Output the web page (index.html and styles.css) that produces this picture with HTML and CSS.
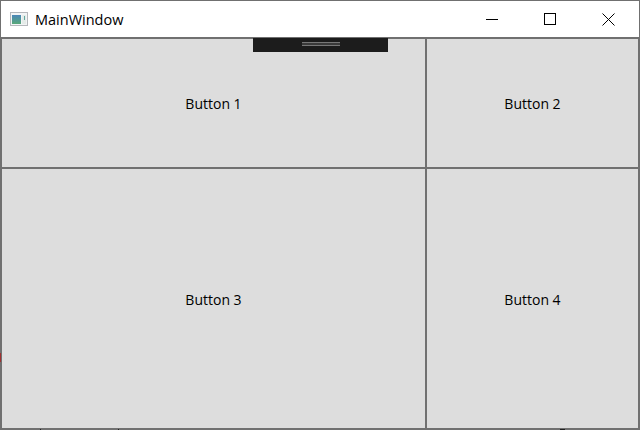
FILE: index.html
```html
<!DOCTYPE html>
<html lang="en">
<head>
<meta charset="utf-8">
<title>MainWindow</title>
<link rel="stylesheet" href="styles.css">
</head>
<body>
<div class="window">
  <header class="titlebar">
    <svg class="app-icon" width="18" height="14" viewBox="0 0 18 14">
      <defs>
        <linearGradient id="pane" x1="0" y1="0" x2="0" y2="1">
          <stop offset="0" stop-color="#4a86b8"/>
          <stop offset="1" stop-color="#58a878"/>
        </linearGradient>
      </defs>
      <rect x="0.5" y="0.5" width="17" height="13" fill="#f2f4f5" stroke="#b4b7bb"/>
      <rect x="2" y="3" width="9" height="9" fill="url(#pane)"/>
      <rect x="12" y="3" width="4" height="9" fill="#e4ebe8"/>
      <rect x="14" y="4" width="1" height="4" fill="#62a8a0"/>
    </svg>
    <span class="title">MainWindow</span>
    <div class="controls">
      <div class="control">
        <svg width="12" height="12" viewBox="0 0 12 12"><path d="M0 6.5H12" stroke="#000" fill="none"/></svg>
      </div>
      <div class="control">
        <svg width="12" height="12" viewBox="0 0 12 12"><rect x="0.5" y="0.5" width="11" height="11" stroke="#000" fill="none"/></svg>
      </div>
      <div class="control">
        <svg width="13" height="13" viewBox="0 0 13 13"><path d="M0.5 0.5L12.5 12.5M12.5 0.5L0.5 12.5" stroke="#000" fill="none"/></svg>
      </div>
    </div>
  </header>
  <main class="grid">
    <div class="cell">Button 1</div>
    <div class="cell">Button 2</div>
    <div class="cell cell-low">Button 3</div>
    <div class="cell cell-low">Button 4</div>
    <div class="toolbar"><div class="grip"></div></div>
    <span class="speck speck-red"></span>
    <span class="speck speck-a"></span>
    <span class="speck speck-b"></span>
    <span class="speck speck-c"></span>
  </main>
</div>
</body>
</html>
```
FILE: styles.css
```css
html, body {
  margin: 0;
  padding: 0;
  width: 640px;
  height: 430px;
  overflow: hidden;
}
.window {
  width: 640px;
  height: 430px;
  box-sizing: border-box;
  background: #707070;
  display: flex;
  flex-direction: column;
  padding-top: 1px;
  font-family: "Open Sans", "Noto Sans", sans-serif;
  color: #000;
}
.titlebar {
  height: 36px;
  margin: 0 1px;
  background: #fff;
  display: flex;
  align-items: center;
  padding-left: 9px;
}
.app-icon {
  flex: none;
}
.title {
  margin-left: 7px;
  font-size: 14.5px;
}
.controls {
  margin-left: auto;
  display: flex;
  height: 100%;
  padding-right: 1px;
}
.control {
  width: 58.5px;
  display: flex;
  align-items: center;
  justify-content: center;
}
.grid {
  position: relative;
  flex: 1;
  display: grid;
  grid-template-columns: 423px 211px;
  grid-template-rows: 128px 259px;
  gap: 2px;
  padding: 2px;
}
.cell {
  background: #dddddd;
  display: flex;
  align-items: center;
  justify-content: center;
  font-size: 14px;
}
.cell-low {
  padding-top: 2px;
}
.toolbar {
  position: absolute;
  left: 253px;
  top: 1px;
  width: 135px;
  height: 14px;
  background: #1c1c1c;
  display: flex;
  align-items: center;
  justify-content: center;
}
.grip {
  width: 38px;
  height: 2px;
  margin-top: -2px;
  background: #3a3a3a;
  border-top: 1px solid #777;
  border-bottom: 1px solid #777;
}
.speck {
  position: absolute;
  width: 1px;
  height: 1px;
  background: #222;
}
.speck-red {
  left: 0;
  top: 316px;
  height: 9px;
  background: #a03030;
}
.speck-a {
  left: 40px;
  bottom: 0;
}
.speck-b {
  left: 118px;
  bottom: 0;
}
.speck-c {
  left: 560px;
  bottom: 0;
  width: 5px;
}
```
